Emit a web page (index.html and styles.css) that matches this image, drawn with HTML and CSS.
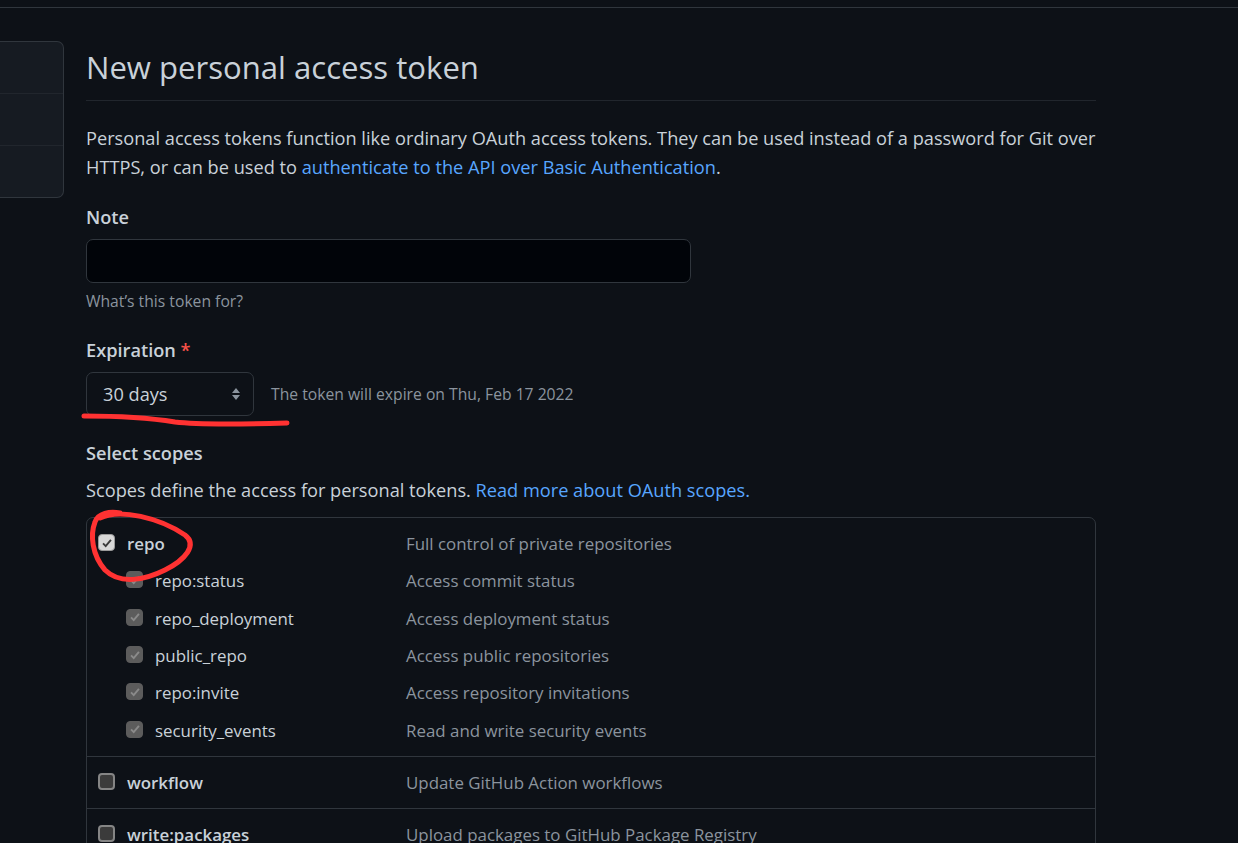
FILE: index.html
```html
<!DOCTYPE html>
<html lang="en">
<head>
<meta charset="utf-8">
<title>New personal access token</title>
<link rel="stylesheet" href="styles.css">
</head>
<body>
<div class="topbar"></div>
<div class="layout">
  <nav class="sidebar">
    <div class="side-item"></div>
    <div class="side-item"></div>
    <div class="side-item"></div>
  </nav>
  <main class="main">
    <h1 class="title">New personal access token</h1>
    <p class="intro">Personal access tokens function like ordinary OAuth access tokens. They can be used instead of a password for Git over HTTPS, or can be used to <a class="link" href="#">authenticate to the API over Basic Authentication</a>.</p>

    <div class="field">
      <label class="label">Note</label>
      <div class="note-input"></div>
      <p class="hint">What’s this token for?</p>
    </div>

    <div class="field field-exp">
      <label class="label">Expiration <span class="req">*</span></label>
      <div class="exp-row">
        <div class="select">
          <span>30 days</span>
          <svg class="select-arrows" width="10" height="16" viewBox="0 0 10 16"><path d="M5 2 L9 7 H1 Z M5 14 L9 9 H1 Z" fill="#8b949e"/></svg>
        </div>
        <span class="exp-note">The token will expire on Thu, Feb 17 2022</span>
      </div>
    </div>

    <div class="field field-scopes">
      <label class="label">Select scopes</label>
      <p class="scopes-desc">Scopes define the access for personal tokens. <a class="link" href="#">Read more about OAuth scopes.</a></p>
    </div>

    <div class="scopes">
      <div class="group">
        <div class="row">
          <div class="name"><span class="cb cb-on"><svg viewBox="0 0 16 16"><path d="M3.5 8.5 L6.5 11.5 L12.5 4.5" fill="none" stroke="#3a3a3a" stroke-width="2.2"/></svg></span><b>repo</b></div>
          <div class="desc">Full control of private repositories</div>
        </div>
        <div class="row sub">
          <div class="name"><span class="cb cb-dis"><svg viewBox="0 0 16 16"><path d="M3.5 8.5 L6.5 11.5 L12.5 4.5" fill="none" stroke="#8a8a8a" stroke-width="2.2"/></svg></span>repo:status</div>
          <div class="desc">Access commit status</div>
        </div>
        <div class="row sub">
          <div class="name"><span class="cb cb-dis"><svg viewBox="0 0 16 16"><path d="M3.5 8.5 L6.5 11.5 L12.5 4.5" fill="none" stroke="#8a8a8a" stroke-width="2.2"/></svg></span>repo_deployment</div>
          <div class="desc">Access deployment status</div>
        </div>
        <div class="row sub">
          <div class="name"><span class="cb cb-dis"><svg viewBox="0 0 16 16"><path d="M3.5 8.5 L6.5 11.5 L12.5 4.5" fill="none" stroke="#8a8a8a" stroke-width="2.2"/></svg></span>public_repo</div>
          <div class="desc">Access public repositories</div>
        </div>
        <div class="row sub">
          <div class="name"><span class="cb cb-dis"><svg viewBox="0 0 16 16"><path d="M3.5 8.5 L6.5 11.5 L12.5 4.5" fill="none" stroke="#8a8a8a" stroke-width="2.2"/></svg></span>repo:invite</div>
          <div class="desc">Access repository invitations</div>
        </div>
        <div class="row sub">
          <div class="name"><span class="cb cb-dis"><svg viewBox="0 0 16 16"><path d="M3.5 8.5 L6.5 11.5 L12.5 4.5" fill="none" stroke="#8a8a8a" stroke-width="2.2"/></svg></span>security_events</div>
          <div class="desc">Read and write security events</div>
        </div>
      </div>
      <div class="group">
        <div class="row">
          <div class="name"><span class="cb cb-off"></span><b>workflow</b></div>
          <div class="desc">Update GitHub Action workflows</div>
        </div>
      </div>
      <div class="group">
        <div class="row">
          <div class="name"><span class="cb cb-off"></span><b>write:packages</b></div>
          <div class="desc">Upload packages to GitHub Package Registry</div>
        </div>
      </div>
    </div>
  </main>
</div>

<svg class="annot" width="1238" height="843" viewBox="0 0 1238 843">
  <path d="M84 416 C 120 416, 150 418, 175 422 C 200 425, 250 424, 287 423" fill="none" stroke="#ff3232" stroke-width="5" stroke-linecap="round"/>
  <path d="M100 518 C 120 508, 160 518, 185 535 C 198 545, 185 560, 165 570 C 145 580, 120 585, 105 570 C 92 555, 90 535, 95 522 C 98 513, 110 511, 120 513" fill="none" stroke="#ff3232" stroke-width="5" stroke-linecap="round"/>
</svg>
</body>
</html>
```

FILE: styles.css
```css
* { box-sizing: border-box; }

html, body {
  margin: 0;
  padding: 0;
  background: #0d1117;
  color: #c9d1d9;
  font-family: "Open Sans", "Noto Sans", sans-serif;
  font-size: 18.2px;
  overflow: hidden;
}

body { width: 1238px; height: 843px; position: relative; }

.topbar {
  height: 8px;
  border-bottom: 1px solid #30363d;
}

.layout {
  display: flex;
  gap: 22px;
  padding-top: 33px;
}

.sidebar {
  width: 64px;
  flex: none;
  align-self: flex-start;
  background: #161b22;
  border: 1px solid #30363d;
  border-left: none;
  border-radius: 0 7px 7px 0;
  overflow: hidden;
}

.side-item {
  height: 52px;
  border-top: 1px solid #21262d;
}
.side-item:first-child { border-top: none; height: 51px; }

.main {
  width: 1010px;
  flex: none;
}

.title {
  margin: 0;
  font-size: 31.1px;
  font-weight: 400;
  line-height: 52px;
  padding-bottom: 7px;
  border-bottom: 1px solid #21262d;
  color: #c9d1d9;
}

.intro {
  margin: 23px 0 0;
  line-height: 29px;
}

.link { color: #58a6ff; text-decoration: none; }

.field { margin-top: 22px; }
.field-exp { margin-top: 24px; }
.field-scopes { margin-top: 24px; }

.label {
  display: block;
  font-weight: 600;
  line-height: 26px;
}

.req { color: #f85149; }

.note-input {
  margin-top: 9px;
  width: 605px;
  height: 44px;
  background: #010409;
  border: 1px solid #30363d;
  border-radius: 7px;
}

.hint {
  margin: 6px 0 0;
  line-height: 24px;
  font-size: 15.7px;
  color: #8b949e;
}

.exp-row {
  margin-top: 9px;
  display: flex;
  align-items: center;
  gap: 17px;
}

.select {
  width: 168px;
  height: 44px;
  border: 1px solid #30363d;
  border-radius: 7px;
  background: #0d1117;
  display: flex;
  align-items: center;
  justify-content: space-between;
  padding: 0 12px 0 16px;
  font-size: 18.2px;
}

.select-arrows { display: block; }

.exp-note {
  color: #8b949e;
  font-size: 15.7px;
}

.scopes-desc {
  margin: 11px 0 0;
  line-height: 26px;
}

.scopes {
  margin-top: 14px;
  border: 1px solid #30363d;
  border-radius: 7px;
  font-size: 16.9px;
}

.group {
  padding: 7px 0;
  border-top: 1px solid #30363d;
}
.group:first-child { border-top: none; }

.row {
  height: 37.3px;
  display: flex;
  align-items: center;
}

.name {
  width: 319px;
  flex: none;
  display: flex;
  align-items: center;
  padding-left: 11px;
}

.row.sub .name { padding-left: 39px; }

.name b { font-weight: 600; }

.desc { color: #8b949e; }

.cb {
  width: 17px;
  height: 17px;
  border-radius: 4px;
  margin-right: 12px;
  flex: none;
  display: inline-flex;
  align-items: center;
  justify-content: center;
  position: relative;
  top: -1px;
}
.cb svg { width: 14px; height: 14px; display: block; }

.cb-on { background: #d8d8d8; border: 1px solid #9a9a9a; }
.cb-dis { background: #5c5c5c; border: 1px solid #5c5c5c; }
.cb-off { background: #3b3b3b; border: 2px solid #858585; }

.annot {
  position: absolute;
  top: 0;
  left: 0;
  pointer-events: none;
}
```
